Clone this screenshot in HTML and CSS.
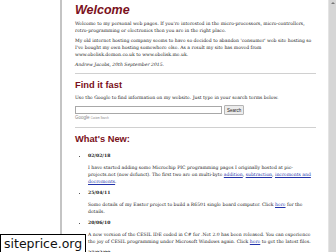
FILE: index.html
```html
<!DOCTYPE html>
<html lang="en">
<head>
<meta charset="UTF-8">
<title>Andrew Jacobs</title>
<link rel="stylesheet" href="styles.css">
</head>
<body>
  <div id="page">
    <div id="sidebar"></div>
    <div id="main">
      <h1 class="welcome">Welcome</h1>
      <p>Welcome to my personal web pages. If you're interested in the micro-processors, micro-controllers, retro-programming or electronics then you are in the right place.</p>
      <p>My old internet hosting company seems to have so decided to abandon 'consumer' web site hosting so I've bought my own hosting somewhere else. As a result my site has moved from www.obelisk.demon.co.uk to www.obelisk.me.uk.</p>
      <p class="sig">Andrew Jacobs, 20th September 2015.</p>
      <hr>
      <h2>Find it fast</h2>
      <p>Use the Google to find information on my website. Just type in your search terms below.</p>
      <div class="search">
        <input type="text" class="search-box">
        <button class="search-btn">Search</button>
      </div>
      <div class="cse"><span class="g">Google</span> <span class="cs">Custom Search</span></div>
      <hr>
      <h2>What's New:</h2>
      <ul class="news">
        <li>
          <div class="date">02/02/18</div>
          <p>I have started adding some Microchip PIC programming pages I originally hosted at pic-projects.net (now defunct). The first two are on multi-byte <a href="#">addition</a>, <a href="#">subtraction</a>, <a href="#">increments and decrements</a>.</p>
        </li>
        <li>
          <div class="date">25/04/11</div>
          <p>Some details of my Easter project to build a R6501 single board computer. Click <a href="#">here</a> for the details.</p>
        </li>
        <li>
          <div class="date">20/06/10</div>
          <p>A new version of the CESIL IDE coded in C# for .Net 2.0 has been released. You can experience the joy of CESIL programming under Microsoft Windows again. Click <a href="#">here</a> to get the latest files.</p>
        </li>
        <li>
          <div class="date">27/03/09</div>
          <p>More to come.</p>
        </li>
      </ul>
    </div>
    <div id="scrollbar"><span class="arrow"></span></div>
  </div>
  <div id="badge">siteprice.org</div>
</body>
</html>
```
FILE: styles.css
```css
html, body {
  margin: 0;
  padding: 0;
  height: 252px;
  overflow: hidden;
  background: #fff;
}
body {
  font-family: "DejaVu Serif", serif;
  font-size: 4.55px;
  line-height: 7px;
  color: #222;
}
#page {
  display: flex;
  height: 252px;
}
#sidebar {
  width: 60px;
  flex: none;
  border-right: 2px solid #c4c4c4;
}
#main {
  width: 241px;
  flex: none;
  padding: 3px 0 0 13px;
}
#scrollbar {
  margin-left: auto;
  width: 7px;
  flex: none;
  background: #d6d6d6;
  border-left: 1px solid #e4e4e4;
  position: relative;
}
#scrollbar .arrow {
  position: absolute;
  top: 2px;
  left: 2px;
  width: 0;
  height: 0;
  border-left: 2px solid transparent;
  border-right: 2px solid transparent;
  border-bottom: 2px solid #777;
}
h1, h2 {
  font-family: "Liberation Sans", sans-serif;
  font-weight: bold;
  color: #7a1020;
  margin: 0;
}
.welcome {
  font-size: 12.5px;
  line-height: 14px;
  font-style: italic;
  margin-bottom: 3px;
}
h2 {
  font-size: 9.3px;
  line-height: 12px;
  margin: 5px 0 3px;
}
p {
  margin: 0 0 3px;
}
.sig {
  font-style: italic;
}
hr {
  border: none;
  border-top: 1px solid #d0d0d0;
  margin: 5px 0 4px;
}
a {
  color: #2233aa;
}
.search {
  display: flex;
  align-items: center;
  gap: 2px;
  margin-top: 4px;
}
.search-box {
  width: 147px;
  height: 8px;
  box-sizing: border-box;
  border: 1px solid #a8a8a8;
  padding: 0;
}
.search-btn {
  font-family: "Liberation Sans", sans-serif;
  font-size: 4.5px;
  height: 10px;
  padding: 0 2px;
  background: #ececec;
  border: 1px solid #b4b4b4;
  border-radius: 1px;
  color: #222;
}
.cse {
  font-family: "Liberation Sans", sans-serif;
  color: #888;
  line-height: 6px;
}
.cse .g {
  font-size: 4.5px;
}
.cse .cs {
  font-size: 2.6px;
}
.news {
  margin: 7px 0 0;
  padding-left: 13px;
}
.news li {
  margin-bottom: 4px;
}
.news .date {
  font-weight: bold;
  margin-bottom: 5px;
}
.news p {
  margin-right: -3px;
}
#badge {
  position: absolute;
  left: 0;
  top: 234px;
  height: 20px;
  padding: 0 3px;
  background: #fff;
  border: 1px solid #000;
  font-family: "DejaVu Sans", sans-serif;
  font-size: 12.5px;
  line-height: 18px;
  color: #111;
}
```
